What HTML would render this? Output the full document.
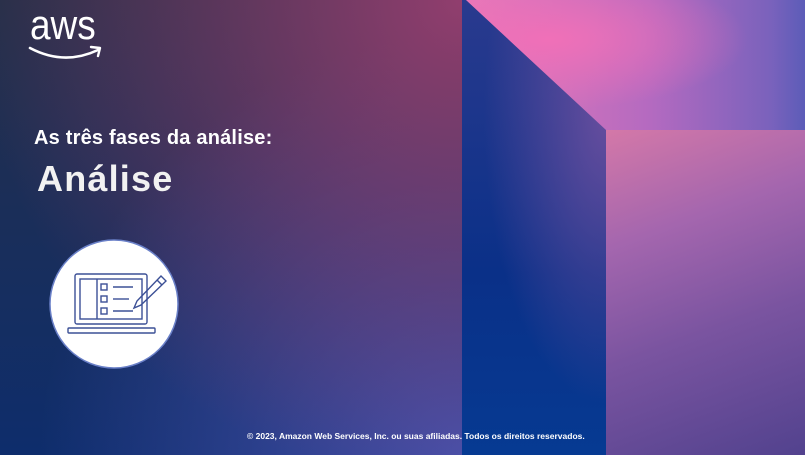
<!DOCTYPE html>
<html><head><meta charset="utf-8"><style>
*{margin:0;padding:0}
body{width:805px;height:455px;overflow:hidden;position:relative;font-family:"Liberation Sans",sans-serif;background:#1a2c5a}
.a{position:absolute}
#left{left:0;top:0;width:462px;height:455px;background:
radial-gradient(circle at 100% 0%,rgba(145,62,110,1) 0,rgba(145,62,110,0) 75%),
radial-gradient(circle at 100% 100%,rgba(70,80,170,1) 0,rgba(70,80,170,0) 65%),
linear-gradient(to bottom,#252f48,#0e2d6c)}
#blue{left:462px;top:0;width:144px;height:455px;clip-path:polygon(0 0,4px 0,144px 129px,144px 455px,0 455px);background:
radial-gradient(ellipse at 100% 25%,rgba(110,80,160,.9) 0,rgba(110,80,160,0) 60%),
linear-gradient(to bottom,#2a3a8e,#0a3088 60%,#063a92)}
#topr{left:462px;top:0;width:343px;height:130px;clip-path:polygon(4px 0,343px 0,343px 130px,144px 130px);background:
radial-gradient(ellipse at 25% 30%,#f070b8 0,rgba(240,112,184,0) 55%),
linear-gradient(to right,#e87ab8,#b46ac0 55%,#7a62bc 90%,#5c5cb8)}
#right{left:606px;top:130px;width:199px;height:325px;background:
linear-gradient(160deg,#d478a8 0%,#a466ae 30%,#7a54a0 60%,#52428e 100%)}
.t1{left:34px;top:127px;color:#fff;font-size:20px;font-weight:bold;letter-spacing:.2px}
.t2{left:37px;top:158px;color:#f2f2f2;font-size:36px;font-weight:bold;letter-spacing:1.2px}
.foot{left:247px;top:431px;color:#fff;font-size:8.5px;font-weight:bold}
.logo{left:30px;top:4px;color:#fff;font-size:42px;line-height:1;transform:scaleX(.88);transform-origin:0 0}
</style></head><body>
<div class="a" id="left"></div>
<div class="a" id="blue"></div>
<div class="a" id="topr"></div>
<div class="a" id="right"></div>
<div class="a logo">aws</div>
<svg class="a" style="left:28px;top:42px" width="76" height="22" viewBox="0 0 76 22"><path d="M2 6 Q36 24 70 8" fill="none" stroke="#fff" stroke-width="2.6" stroke-linecap="round"/><path d="M63 5 L72 6 L70 14" fill="none" stroke="#fff" stroke-width="2.4" stroke-linecap="round" stroke-linejoin="round"/></svg>
<div class="a t1">As três fases da análise:</div>
<div class="a t2">Análise</div>
<svg class="a" style="left:47px;top:238px" width="134" height="134" viewBox="0 0 134 134">
<circle cx="67" cy="66" r="64" fill="#fff" stroke="#6a80c8" stroke-width="1.5"/>
<g fill="none" stroke="#3c5096" stroke-width="1.4">
<rect x="28" y="36" width="72" height="50" rx="2"/>
<rect x="33" y="41" width="62" height="40"/>
<line x1="50" y1="41" x2="50" y2="81"/>
<rect x="21" y="90" width="87" height="5" rx="1"/>
<rect x="54" y="46" width="6" height="6"/><line x1="66" y1="49" x2="86" y2="49"/>
<rect x="54" y="58" width="6" height="6"/><line x1="66" y1="61" x2="82" y2="61"/>
<rect x="54" y="70" width="6" height="6"/><line x1="66" y1="73" x2="86" y2="73"/>
<path d="M114 38 L119 43 L94 67 L87 70 L90 63 Z"/><line x1="110" y1="42" x2="115" y2="47"/>
</g></svg>
<div class="a foot">© 2023, Amazon Web Services, Inc. ou suas afiliadas. Todos os direitos reservados.</div>
</body></html>
